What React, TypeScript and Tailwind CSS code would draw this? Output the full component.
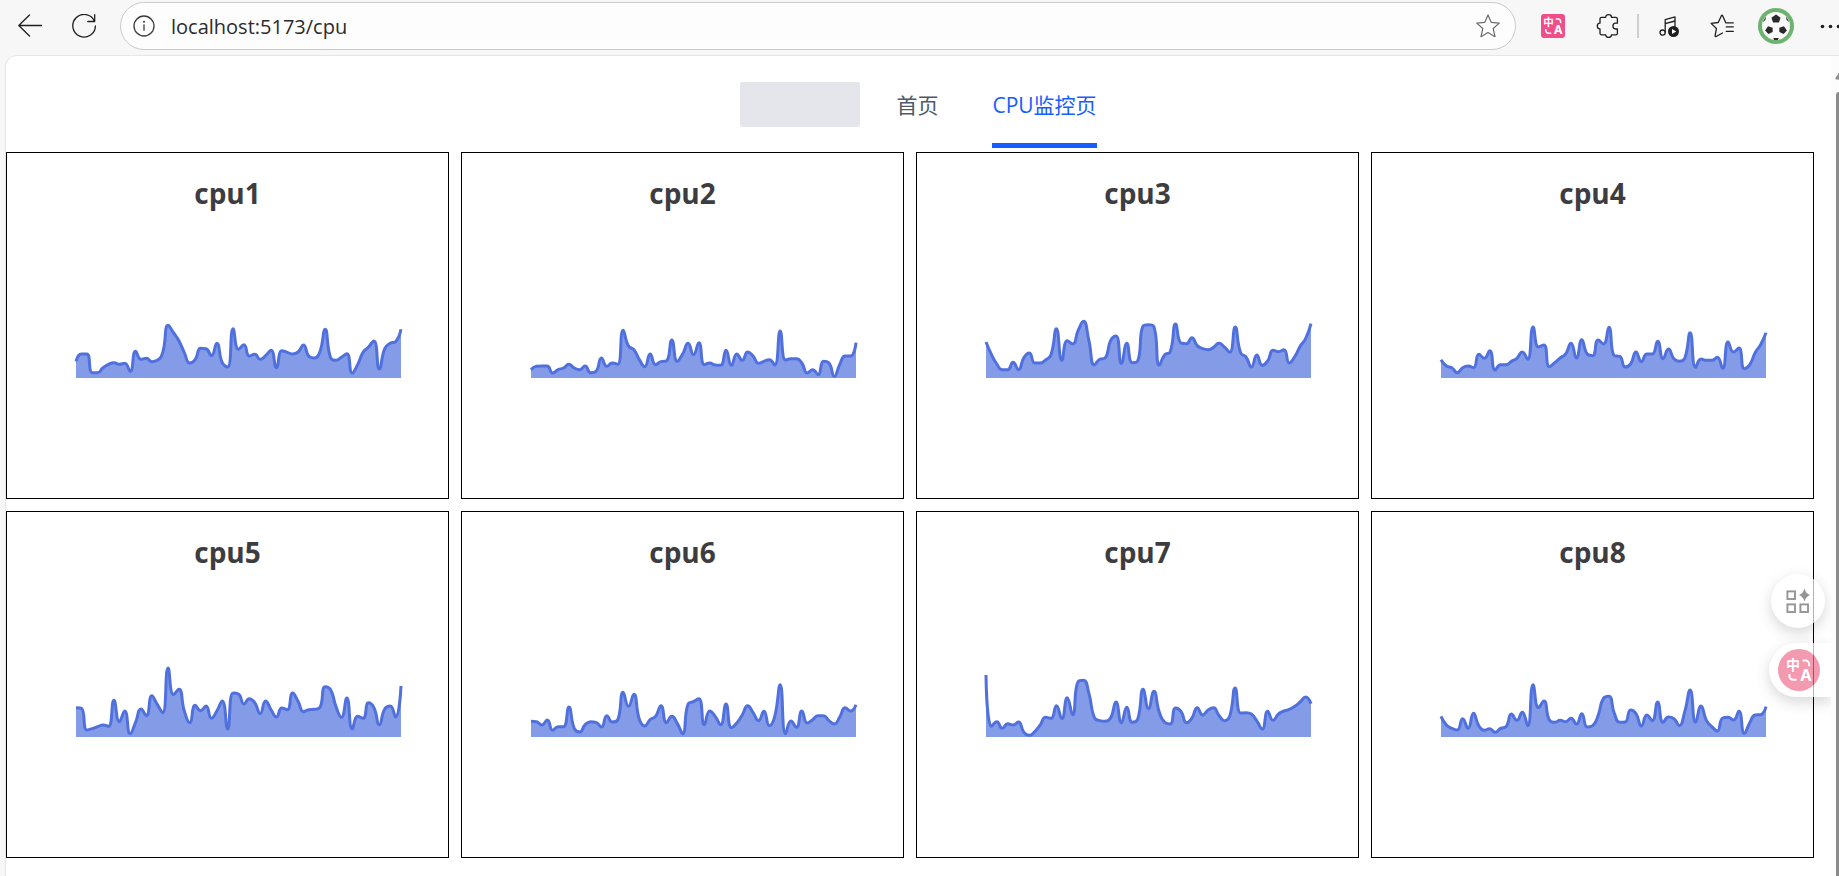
import { useMemo } from 'react';
import type { ReactNode } from 'react';

interface CpuSeries {
  name: string;
  usage: number[];
}

interface IconProps {
  className?: string;
}

const CPUS: CpuSeries[] = [
  {
    name: 'cpu1',
    usage: [
      50, 72, 72, 16, 16, 31, 41, 46, 41, 44, 20, 80, 56, 59, 49, 53, 76, 158, 136, 112, 76, 45, 55, 89, 88, 67, 104, 46, 33, 148, 86,
      100, 66, 71, 56, 67, 83, 31, 82, 77, 72, 78, 99, 65, 60, 77, 146, 61, 53, 62, 73, 15, 40, 77, 93, 111, 27, 88, 104, 109, 146,
    ],
  },
  {
    name: 'cpu2',
    usage: [
      25, 35, 36, 36, 15, 25, 30, 41, 30, 25, 36, 16, 20, 60, 35, 45, 41, 143, 96, 85, 55, 34, 72, 40, 49, 51, 114, 50, 72, 104, 70,
      106, 40, 45, 39, 38, 83, 38, 72, 53, 78, 66, 44, 50, 55, 39, 141, 54, 58, 58, 45, 15, 25, 10, 50, 45, 5, 41, 66, 66, 106,
    ],
  },
  {
    name: 'cpu3',
    usage: [
      108, 71, 42, 25, 25, 47, 25, 61, 75, 45, 45, 54, 70, 148, 53, 112, 102, 142, 170, 112, 39, 56, 60, 112, 126, 44, 104, 46, 51, 156,
      160, 154, 39, 70, 78, 162, 105, 103, 121, 97, 88, 85, 92, 104, 93, 77, 153, 76, 63, 33, 69, 38, 51, 83, 79, 85, 45, 64, 95, 118, 163,
    ],
  },
  {
    name: 'cpu4',
    usage: [
      55, 36, 31, 16, 31, 36, 31, 71, 59, 82, 24, 40, 40, 50, 59, 78, 56, 153, 93, 99, 34, 46, 60, 72, 104, 60, 115, 72, 67, 114, 102,
      152, 67, 65, 33, 42, 78, 49, 72, 72, 110, 58, 87, 58, 50, 59, 136, 32, 57, 53, 53, 62, 29, 108, 78, 90, 28, 40, 76, 100, 136,
    ],
  },
  {
    name: 'cpu5',
    usage: [
      88, 86, 21, 25, 31, 36, 32, 110, 46, 78, 10, 44, 84, 64, 124, 98, 73, 207, 127, 143, 78, 43, 95, 79, 93, 56, 78, 108, 24, 132, 129,
      99, 115, 103, 70, 108, 82, 60, 87, 82, 132, 107, 76, 82, 83, 88, 151, 142, 91, 59, 117, 24, 62, 56, 103, 88, 37, 84, 93, 60, 153,
    ],
  },
  {
    name: 'cpu6',
    usage: [
      47, 46, 36, 51, 20, 31, 31, 90, 25, 15, 37, 46, 44, 30, 64, 45, 51, 134, 92, 128, 53, 33, 52, 62, 94, 43, 62, 41, 10, 99, 106,
      115, 37, 78, 62, 37, 99, 28, 42, 66, 94, 73, 49, 77, 34, 62, 157, 10, 48, 29, 78, 42, 52, 64, 64, 49, 39, 60, 88, 78, 97,
    ],
  },
  {
    name: 'cpu7',
    usage: [
      186, 32, 46, 26, 40, 36, 45, 14, 5, 16, 36, 59, 56, 94, 55, 118, 67, 166, 170, 131, 58, 49, 47, 57, 105, 43, 89, 44, 53, 143, 85,
      137, 74, 44, 39, 87, 77, 43, 56, 88, 66, 81, 88, 65, 49, 63, 147, 72, 73, 69, 48, 24, 77, 50, 69, 78, 83, 92, 105, 120, 100,
    ],
  },
  {
    name: 'cpu8',
    usage: [
      62, 36, 26, 21, 55, 26, 71, 33, 20, 25, 14, 26, 31, 69, 50, 74, 34, 157, 88, 108, 51, 44, 50, 46, 56, 39, 70, 30, 34, 64, 116,
      122, 71, 44, 45, 81, 70, 33, 66, 49, 105, 44, 60, 55, 34, 76, 141, 44, 93, 50, 31, 18, 57, 59, 51, 77, 11, 43, 66, 67, 91,
    ],
  },
];

const CHART_W = 975;
const CHART_H = 240;
const SMOOTH = 0.5;

const between = (value: number, a: number, b: number) => Math.max(Math.min(value, Math.max(a, b)), Math.min(a, b));

// Smooth line whose control points never leave the box of their own segment
const smoothPath = (values: number[]) => {
  const step = CHART_W / (values.length - 1);
  const pts = values.map((v, i) => [i * step, CHART_H - v]);
  let d = `M${pts[0][0]},${pts[0][1]}`;
  let [cx0, cy0] = pts[0];

  for (let i = 1; i < pts.length; i++) {
    const [x, y] = pts[i];
    const [px, py] = pts[i - 1];
    let cx1 = x;
    let cy1 = y;
    let nx0 = x;
    let ny0 = y;

    if (i < pts.length - 1) {
      const [nx, ny] = pts[i + 1];
      const lenPrev = Math.hypot(x - px, y - py);
      const lenNext = Math.hypot(nx - x, ny - y);
      const ratio = lenNext / (lenNext + lenPrev);
      nx0 = between(x + (nx - px) * SMOOTH * ratio, x, nx);
      ny0 = between(y + (ny - py) * SMOOTH * ratio, y, ny);
      cx1 = between(x - ((nx0 - x) * lenPrev) / lenNext, px, x);
      cy1 = between(y - ((ny0 - y) * lenPrev) / lenNext, py, y);
      nx0 = x + ((x - cx1) * lenNext) / lenPrev;
      ny0 = y + ((y - cy1) * lenNext) / lenPrev;
    }

    d += `C${cx0},${cy0} ${cx1},${cy1} ${x},${y}`;
    cx0 = nx0;
    cy0 = ny0;
  }
  return d;
};

const BackIcon = () => (
  <svg viewBox="0 0 24 24" className="h-6 w-6" fill="none" stroke="#1f1f1f" strokeWidth="1.3" strokeLinecap="round" strokeLinejoin="round">
    <path d="M23.5 11.5H.8M11.5 1 .8 11.5 11.5 22" />
  </svg>
);

const RefreshIcon = () => (
  <svg viewBox="0 0 24 24" className="h-6 w-6" fill="none" stroke="#1f1f1f" strokeWidth="1.3" strokeLinecap="round" strokeLinejoin="round">
    <path d="M22.5 7.3A11.3 11.3 0 1 0 23.4 12M22.7.7v6.8h-6.9" />
  </svg>
);

const InfoIcon = () => (
  <svg viewBox="0 0 22 22" className="h-[22px] w-[22px]" fill="none" stroke="#3c3c3c" strokeWidth="1.3">
    <circle cx="11" cy="11" r="10" />
    <path d="M11 9.8v5.4" strokeLinecap="round" />
    <circle cx="11" cy="6.8" r="1" fill="#3c3c3c" stroke="none" />
  </svg>
);

const StarIcon = () => (
  <svg viewBox="0 0 24 24" className="h-6 w-6" fill="none" stroke="#6b6b6b" strokeWidth="1.2" strokeLinejoin="round">
    <path d="M12 .9 15.2 8.3 23.3 9.1 17.2 14.5 19 22.7 12 18.5 5 22.7 6.8 14.5.7 9.1 8.8 8.3Z" />
  </svg>
);

const TranslateMark = ({ className }: IconProps) => (
  <svg viewBox="0 0 24 24" className={className} overflow="visible" fill="none" stroke="#fff" strokeWidth="2">
    <text x="-1" y="12" fill="#fff" stroke="none" fontSize="14" fontWeight="700" fontFamily="'Noto Sans CJK SC', sans-serif">
      中
    </text>
    <text x="13" y="23" fill="#fff" stroke="none" fontSize="16" fontWeight="700" fontFamily="Inter, sans-serif">
      A
    </text>
    <path d="M15.5 2.6h3.2a3.4 3.4 0 0 1 3.4 3.4v2.2M2.4 16v2a3.8 3.8 0 0 0 3.8 3.8h3.4" />
  </svg>
);

const PuzzleIcon = () => (
  <svg viewBox="0 0 24 24" className="h-6 w-6" fill="none" stroke="#1f1f1f" strokeWidth="1.3" strokeLinejoin="round">
    <path d="M6.6 3.3h4.1c0-1.700 1.300-2.600 2.900-2.600s2.900.9 2.900 2.600h4.300a1.600 1.600 0 0 1 1.600 1.600v4.300h-1.600a2.900 2.900 0 0 0 0 5.800h1.600v4.200a1.600 1.600 0 0 1-1.600 1.600h-4.300c0 1.600-1.300 2.700-2.900 2.700s-2.900-1.100-2.900-2.700H6.600A1.600 1.600 0 0 1 5 19.200V15c-1.700 0-2.700-1.300-2.700-2.900S3.300 9.200 5 9.200V4.900a1.600 1.600 0 0 1 1.600-1.600Z" />
  </svg>
);

const MusicIcon = () => (
  <svg viewBox="0 0 24 24" className="h-6 w-6" fill="none" stroke="#1f1f1f" strokeWidth="1.3" strokeLinejoin="round">
    <circle cx="4.6" cy="18.6" r="2.6" />
    <path d="M7.2 18.6v-13L17 2.9V13M7.2 9.700 17 7" />
    <circle cx="15.5" cy="17.5" r="5.5" fill="#1f1f1f" stroke="none" />
    <path d="M14 15v5l4.2-2.5Z" fill="#fff" stroke="none" />
  </svg>
);

const FavoritesIcon = () => (
  <svg viewBox="0 0 24 24" className="h-6 w-6" fill="none" stroke="#1f1f1f" strokeWidth="1.3" strokeLinecap="round" strokeLinejoin="round">
    <path d="M23.3 8.800h-7.500L12.600 1.700Q12 .7 11.400 1.700L8.200 8.500l-7.100.9 5.300 5.100-1.300 7.300q0 1.100 1 .7L12.500 19M16.300 12.900h7M16.300 17.400h7" />
  </svg>
);

const FootballAvatar = () => (
  <svg viewBox="0 0 36 36" className="h-9 w-9">
    <circle cx="18" cy="18" r="18" fill="#6db36f" />
    <circle cx="18" cy="18" r="14" fill="#fafafa" />
    <g fill="#2a2a2a">
      <path d="m18 6.500 4.600 3.200-1.700 4.800h-5.800l-1.700-4.800Z" />
      <path d="m10 18.300 4.700 1.500v4.100l-4.300 2-3.300-3.500Z" />
      <path d="m26 18.300-4.700 1.500v4.100l4.300 2 3.300-3.500Z" />
      <path d="m8.200 8.300-2.700 4.200-.2 1.600 2-2ZM27.800 8.300l2.700 4.200.2 1.600-2-2ZM15.200 30h5.600l-1 2h-3.600Z" />
    </g>
  </svg>
);

const MoreIcon = () => (
  <svg viewBox="0 0 19 24" className="h-6 w-[19px]" fill="#1f1f1f">
    <circle cx="2.5" cy="12.5" r="1.8" />
    <circle cx="10.5" cy="12.5" r="1.8" />
    <circle cx="18.5" cy="12.5" r="1.8" />
  </svg>
);

const AppsIcon = () => (
  <svg viewBox="0 0 24 26" className="h-[26px] w-6" fill="none" stroke="#696969" strokeWidth="1.9">
    <rect x="1.4" y="3.4" width="7.6" height="7.6" />
    <rect x="1.4" y="16.4" width="7.6" height="7.6" />
    <rect x="14.4" y="16.4" width="7.6" height="7.6" />
    <path d="M18.500.5q1.300 5 5.500 6.500-4.200 1.500-5.500 6.500-1.300-5-5.500-6.500 4.200-1.500 5.500-6.500Z" fill="#696969" stroke="none" />
  </svg>
);

const ToolbarButton = ({ label, children }: { label: string; children: ReactNode }) => (
  <button type="button" aria-label={label} className="shrink-0">
    {children}
  </button>
);

const Toolbar = () => (
  <header className="flex h-[55px] items-center pb-[3px] pl-[18px]">
    <div className="flex gap-[30px] pr-6">
      <ToolbarButton label="返回">
        <BackIcon />
      </ToolbarButton>
      <ToolbarButton label="刷新">
        <RefreshIcon />
      </ToolbarButton>
    </div>
    <div className="flex h-12 min-w-0 flex-1 items-center rounded-full border border-[#cacaca] bg-[#fdfdfd] pr-[15px] pl-3">
      <InfoIcon />
      <input
        type="text"
        aria-label="地址栏"
        defaultValue="localhost:5173/cpu"
        className="ml-4 min-w-0 flex-1 bg-transparent pt-[2px] font-['Open_Sans',sans-serif] text-[20px] leading-7 text-[#2b2b2b] outline-none"
      />
      <ToolbarButton label="收藏">
        <StarIcon />
      </ToolbarButton>
    </div>
    <div className="flex items-center pl-[25px]">
      <button type="button" aria-label="翻译" className="flex h-6 w-6 items-center justify-center rounded-[3px] bg-[#ef4e8a]">
        <TranslateMark className="h-[18px] w-[18px]" />
      </button>
      <div className="mr-[18px] ml-[30px] flex">
        <ToolbarButton label="扩展">
          <PuzzleIcon />
        </ToolbarButton>
      </div>
      <span className="h-6 w-[2px] bg-[#cfcfcf]" />
      <div className="ml-[19px] flex items-center gap-7">
        <ToolbarButton label="媒体">
          <MusicIcon />
        </ToolbarButton>
        <ToolbarButton label="收藏夹">
          <FavoritesIcon />
        </ToolbarButton>
      </div>
      <div className="ml-6 flex items-center gap-[26px]">
        <ToolbarButton label="账户">
          <FootballAvatar />
        </ToolbarButton>
        <ToolbarButton label="更多">
          <MoreIcon />
        </ToolbarButton>
      </div>
    </div>
  </header>
);

const NavMenu = () => (
  <nav className="flex h-24 items-center justify-center px-6 text-[21px]">
    <div className="h-[45px] w-[120px] rounded-[3px] bg-[#e5e6eb]" />
    <a href="/" className="ml-9 flex h-full items-center pt-1 text-[#4e5969]">
      首页
    </a>
    <a href="/cpu" className="relative ml-[54px] flex h-full items-center pt-1 text-[#165dff]">
      CPU监控页
      <span className="absolute inset-x-0 bottom-1 h-[5px] bg-[#165dff]" />
    </a>
  </nav>
);

const CpuCard = ({ name, usage }: CpuSeries) => {
  const line = useMemo(() => smoothPath(usage), [usage]);

  return (
    <section className="h-[347px] border border-black pt-[22px]">
      <h2 className="text-center font-['Open_Sans',sans-serif] text-[28px] leading-9 font-bold text-[#3d3d41]">{name}</h2>
      <div className="mt-[87px] pr-[47px] pl-[69px]">
        <svg viewBox={`0 0 ${CHART_W} ${CHART_H}`} className="block w-full overflow-visible">
          <path d={`${line}V${CHART_H}H0Z`} fill="#5070dd" fillOpacity="0.7" />
          <path d={line} fill="none" stroke="#5070dd" strokeWidth="9" strokeLinejoin="bevel" />
        </svg>
      </div>
    </section>
  );
};

const FloatingTools = () => (
  <div className="absolute top-[518px] right-0 flex flex-col items-end gap-[15px]">
    <button
      type="button"
      aria-label="应用"
      className="mr-[6px] flex h-[54px] w-[54px] items-center justify-center rounded-full bg-white opacity-70 shadow-[0_5px_14px_rgba(0,0,0,0.22)]"
    >
      <AppsIcon />
    </button>
    <button
      type="button"
      aria-label="翻译网页"
      className="flex h-[54px] w-[62px] items-center rounded-l-full bg-white pl-[9px] opacity-70 shadow-[0_5px_14px_rgba(0,0,0,0.22)]"
    >
      <span className="flex h-[42px] w-[42px] items-center justify-center rounded-full bg-[#ee6f8f]">
        <TranslateMark className="h-6 w-6" />
      </span>
    </button>
  </div>
);

const Scrollbar = () => (
  <div className="flex w-2 shrink-0 flex-col items-end overflow-hidden bg-[#fcfcfc] pt-4">
    <svg viewBox="0 0 4 8" className="h-2 w-1" fill="#8b8b8b">
      <path d="M4 .5.5 6Q0 7.5 1.500 7.500H4Z" />
    </svg>
    <div className="mt-3 w-[3px] flex-1 rounded-tl-[4px] bg-[#8b8b8b]" />
  </div>
);

const App = () => {
  return (
    <div className="flex h-screen flex-col overflow-hidden bg-[#f7f7f7] font-['Open_Sans','Noto_Sans_CJK_SC',sans-serif]">
      <Toolbar />
      <div className="ml-[5px] flex min-h-0 flex-1 overflow-hidden rounded-tl-xl border-t border-l border-[#e6e6e6] bg-white">
        <div className="relative min-w-0 flex-1 overflow-hidden">
          <NavMenu />
          <main className="grid grid-cols-4 gap-3 pr-[17px]">
            {CPUS.map((cpu) => (
              <CpuCard key={cpu.name} name={cpu.name} usage={cpu.usage} />
            ))}
          </main>
          <FloatingTools />
        </div>
        <Scrollbar />
      </div>
    </div>
  );
};

export default App;
